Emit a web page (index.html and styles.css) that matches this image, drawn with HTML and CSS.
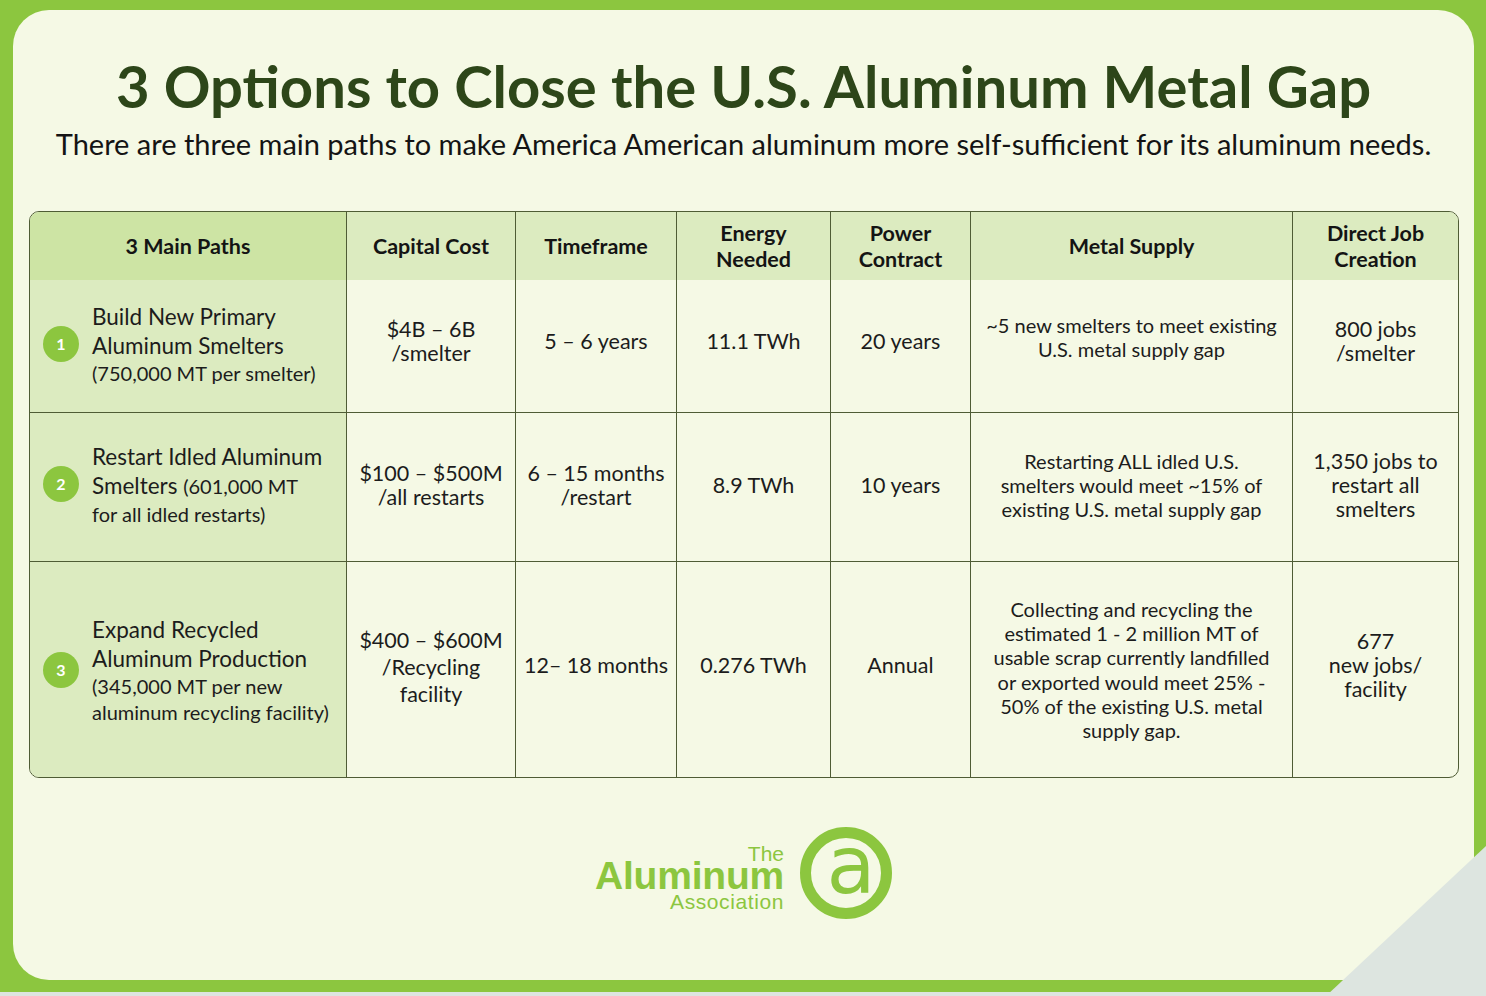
FILE: index.html
```html
<!DOCTYPE html>
<html lang="en">
<head>
<meta charset="utf-8">
<title>3 Options to Close the U.S. Aluminum Metal Gap</title>
<link rel="stylesheet" href="styles.css">
</head>
<body>
<div class="card">
  <h1 class="title">3 Options to Close the U.S. Aluminum Metal Gap</h1>
  <p class="subtitle">There are three main paths to make America American aluminum more self-sufficient for its aluminum needs.</p>

  <div class="table-wrap">
    <table class="grid">
      <colgroup>
        <col class="c1"><col class="c2"><col class="c3"><col class="c4"><col class="c5"><col class="c6"><col class="c7">
      </colgroup>
      <thead>
        <tr>
          <th class="first">3 Main Paths</th>
          <th>Capital Cost</th>
          <th>Timeframe</th>
          <th>Energy<br>Needed</th>
          <th>Power<br>Contract</th>
          <th>Metal Supply</th>
          <th class="last">Direct Job<br>Creation</th>
        </tr>
      </thead>
      <tbody>
        <tr class="r1">
          <td class="path">
            <div class="path-inner">
              <span class="badge">1</span>
              <div class="path-text">
                <div class="big">Build New Primary</div>
                <div class="big">Aluminum Smelters</div>
                <div class="small">(750,000 MT per smelter)</div>
              </div>
            </div>
          </td>
          <td>$4B – 6B<br>/smelter</td>
          <td>5 – 6 years</td>
          <td>11.1 TWh</td>
          <td>20 years</td>
          <td class="supply">~5 new smelters to meet existing<br>U.S. metal supply gap</td>
          <td class="last">800 jobs<br>/smelter</td>
        </tr>
        <tr class="r2">
          <td class="path">
            <div class="path-inner">
              <span class="badge">2</span>
              <div class="path-text">
                <div class="big">Restart Idled Aluminum</div>
                <div class="big">Smelters <span class="small">(601,000 MT</span></div>
                <div class="small">for all idled restarts)</div>
              </div>
            </div>
          </td>
          <td>$100 – $500M<br>/all restarts</td>
          <td>6 – 15 months<br>/restart</td>
          <td>8.9 TWh</td>
          <td>10 years</td>
          <td class="supply">Restarting ALL idled U.S.<br>smelters would meet ~15% of<br>existing U.S. metal supply gap</td>
          <td class="last">1,350 jobs to<br>restart all<br>smelters</td>
        </tr>
        <tr class="r3">
          <td class="path">
            <div class="path-inner">
              <span class="badge">3</span>
              <div class="path-text">
                <div class="big">Expand Recycled</div>
                <div class="big">Aluminum Production</div>
                <div class="small">(345,000 MT per new</div>
                <div class="small">aluminum recycling facility)</div>
              </div>
            </div>
          </td>
          <td class="cost3">$400 – $600M<br>/Recycling<br>facility</td>
          <td>12– 18 months</td>
          <td>0.276 TWh</td>
          <td>Annual</td>
          <td class="supply">Collecting and recycling the<br>estimated 1 - 2 million MT of<br>usable scrap currently landfilled<br>or exported would meet 25% -<br>50% of the existing U.S. metal<br>supply gap.</td>
          <td class="last">677<br>new jobs/<br>facility</td>
        </tr>
      </tbody>
    </table>
  </div>

  <div class="logo">
    <div class="logo-text">
      <span class="logo-the">The</span>
      <span class="logo-alu">Aluminum</span>
      <span class="logo-assoc">Association</span>
    </div>
    <div class="logo-mark"><span class="logo-a">a</span></div>
  </div>
</div>
<svg class="fold" width="170" height="150" viewBox="0 0 170 150" aria-hidden="true">
  <polygon points="170,0 170,150 10,150" fill="#dde5e0"/>
</svg>
</body>
</html>
```

FILE: styles.css
```css
html, body {
  margin: 0;
  padding: 0;
}
body {
  width: 1486px;
  height: 996px;
  overflow: hidden;
  position: relative;
  background: linear-gradient(to bottom, #8cc63f 0, #8cc63f 992px, #dde5e0 992px);
  font-family: Lato, "Open Sans", sans-serif;
  color: #1c1c1c;
}
.card {
  position: relative;
  margin: 10px 12px 0 13px;
  height: 970px;
  box-sizing: border-box;
  background: #f5f9e5;
  border-radius: 36px;
  padding-top: 46px;
}
.title {
  margin: 0;
  text-align: center;
  font-size: 58px;
  line-height: 60px;
  font-weight: 700;
  color: #2d4619;
  letter-spacing: 0;
}
.subtitle {
  margin: 10px 0 0;
  text-align: center;
  font-size: 29px;
  line-height: 36px;
  color: #141414;
}
.table-wrap {
  margin: 49px 0 0 16px;
  width: 1430px;
  border: 1.5px solid #4f5c35;
  border-radius: 10px;
  overflow: hidden;
  box-sizing: border-box;
}
.grid {
  width: 100%;
  border-collapse: separate;
  border-spacing: 0;
  table-layout: fixed;
}
.c1 { width: 317px; }
.c2 { width: 169px; }
.c3 { width: 161px; }
.c4 { width: 154px; }
.c5 { width: 140px; }
.c6 { width: 322px; }
.c7 { width: auto; }
.grid th {
  background: #dcebc0;
  height: 68px;
  padding: 0 4px;
  font-size: 21.5px;
  line-height: 26px;
  font-weight: 700;
  color: #141414;
  text-align: center;
  vertical-align: middle;
  border-right: 1.5px solid #4f5c35;
}
.grid th.first {
  background: #cde4a4;
}
.grid th.last, .grid td.last {
  border-right: none;
}
.grid td {
  padding: 0 4px 10px;
  font-size: 21.5px;
  line-height: 24px;
  text-align: center;
  vertical-align: middle;
  color: #1c1c1c;
  border-right: 1.5px solid #4f5c35;
  border-top: 1.5px solid #4f5c35;
}
.grid tbody tr:first-child td {
  border-top: none;
}
.grid .r2 td {
  padding-bottom: 4px;
}
.grid td.path {
  background: #dcebc0;
  text-align: left;
  padding: 0;
}
.grid .r1 td.path { height: 128px; padding-bottom: 4px; }
.grid .r2 td.path { height: 142px; padding-bottom: 6px; }
.grid .r3 td.path { height: 215px; padding-bottom: 0; }
.grid td.supply {
  font-size: 20px;
  line-height: 24.3px;
}
.grid .r1 td.supply { padding-bottom: 18px; }
.grid .r3 td.supply { padding-bottom: 0; }
.grid td.cost3 {
  line-height: 27px;
  padding-bottom: 4px;
}
.path-inner {
  display: flex;
  align-items: center;
  padding-left: 13px;
}
.badge {
  flex: none;
  width: 36px;
  height: 36px;
  border-radius: 50%;
  background: #8cc63f;
  color: #fff;
  font-weight: 700;
  font-size: 16px;
  line-height: 36px;
  text-align: center;
  margin-right: 13px;
}
.path-text .big {
  font-size: 22.5px;
  line-height: 29px;
}
.path-text .small {
  font-size: 20px;
  line-height: 26px;
}
.path-text .big .small {
  line-height: 29px;
}
.logo {
  display: flex;
  justify-content: center;
  align-items: center;
  margin-top: 49px;
  gap: 16px;
}
.logo-text {
  display: flex;
  flex-direction: column;
  align-items: flex-end;
  padding-top: 14px;
  font-family: "Liberation Sans", Arial, sans-serif;
  color: #8cc63f;
}
.logo-the {
  font-size: 21px;
  line-height: 18px;
}
.logo-alu {
  font-size: 39px;
  line-height: 25.5px;
  font-weight: 700;
  letter-spacing: -0.2px;
}
.logo-assoc {
  font-size: 21px;
  line-height: 27px;
  letter-spacing: 0.6px;
}
.logo-mark {
  flex: none;
  width: 92px;
  height: 92px;
  box-sizing: border-box;
  border: 11px solid #8cc63f;
  border-radius: 50%;
  display: flex;
  align-items: center;
  justify-content: center;
}
.logo-a {
  font-family: "DejaVu Sans", sans-serif;
  font-size: 80px;
  line-height: 60px;
  font-weight: 400;
  color: #8cc63f;
  margin-top: -14px;
  margin-left: 10px;
}
.fold {
  position: absolute;
  right: 0;
  bottom: 0;
  display: block;
}
```
